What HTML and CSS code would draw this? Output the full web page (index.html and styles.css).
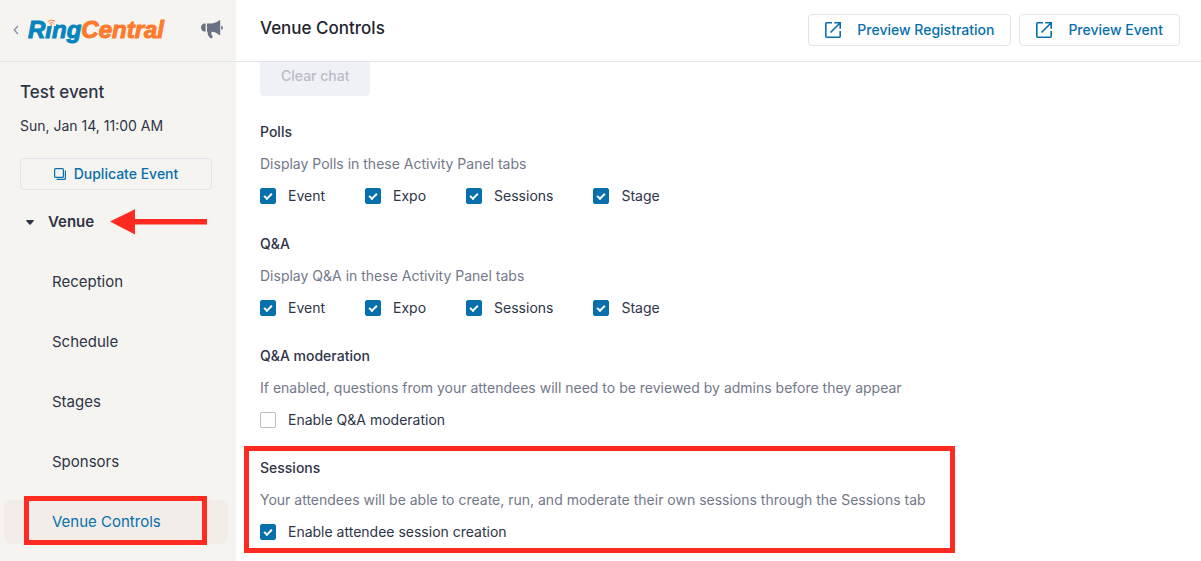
FILE: index.html
```
<!DOCTYPE html>
<html lang="en">
<head>
<meta charset="utf-8">
<meta name="viewport" content="width=device-width, initial-scale=1">
<title>Venue Controls</title>
<link rel="stylesheet" href="styles.css">
</head>
<body>
<div class="app">
  <aside class="sidebar">
    <div class="brand-bar">
      <button class="icon-button back" type="button" aria-label="Back">
        <svg width="6" height="10" viewBox="0 0 6 10" fill="none" stroke="#858a9a" stroke-width="1.200"><path d="M5 1 1.200 5 5 9"/></svg>
      </button>
      <a class="logo" href="#"><span class="logo-ring">Ring</span><span class="logo-central">Central</span>
        <svg class="logo-signal" width="9" height="7" viewBox="0 0 9 7" fill="none" stroke="#ff7a2b"><path class="logo-patch" d="M0 0h9v7H0z"/><path d="M.8 2.600Q4-.4 8 2.200M2.400 4.500Q4.300 2.800 6.600 4.200"/><circle cx="4.300" cy="6" r=".6"/></svg>
      </a>
      <button class="icon-button announce" type="button" aria-label="Announcements">
        <svg width="22" height="19" viewBox="0 0 22 19" fill="#6b7184"><path d="M4.600 3.600v8H3.400C1.500 11.600 0 9.800 0 7.600s1.500-4 3.400-4zM6 3.500C11 4 15.500 2.600 18.300.2q.9-.5.9.5v13.800q0 1-.9.500C16 13 13.700 12 11.200 11.800q-1.500.9-.8 2.800l1.400 1.800-1.200 2.100C8 17.700 6.300 15 6.600 11.700H6zM20.200 5.700c2.300.2 2.300 3.800 0 4z"/></svg>
      </button>
    </div>
    <div class="event">
      <h2 class="event-name">Test event</h2>
      <p class="event-date">Sun, Jan 14, 11:00 AM</p>
      <button class="button duplicate" type="button">
        <svg width="12" height="12" viewBox="0 0 12 12" fill="none" stroke="currentColor" stroke-width="1.200"><rect x=".6" y=".6" width="8.800" height="8.800" rx="1"/><path d="M11.400 2.500v7.900a1 1 0 0 1-1 1H2.500"/></svg>
        Duplicate Event
      </button>
    </div>
    <nav class="nav">
      <button class="nav-group" type="button" aria-expanded="true">
        <svg width="8" height="5" viewBox="0 0 8 5" fill="currentColor"><path d="M.7 0h6.600q1 .2.4 1L4.600 4.600q-.6.500-1.200 0L.3 1Q-.2.2.7 0z"/></svg>
        Venue
        <svg class="arrow" width="97" height="26" viewBox="0 0 97 26" fill="#ff2a20"><path d="M0 12.500 25 .3v9.800h72v5.500H25v10z"/></svg>
      </button>
      <ul class="nav-list">
        <li><a class="nav-link" href="#">Reception</a></li>
        <li><a class="nav-link" href="#">Schedule</a></li>
        <li><a class="nav-link" href="#">Stages</a></li>
        <li><a class="nav-link" href="#">Sponsors</a></li>
        <li><a class="nav-link current" href="#" aria-current="page">Venue Controls</a></li>
      </ul>
    </nav>
  </aside>
  <main class="main">
    <header class="topbar">
      <h1 class="page-title">Venue Controls</h1>
      <div class="actions">
        <button class="button preview" type="button">
          <svg width="16" height="16" viewBox="0 0 16 16" fill="none" stroke="currentColor" stroke-width="1.600"><path d="M7 .8H1.800a1 1 0 0 0-1 1v12.400a1 1 0 0 0 1 1h12.400a1 1 0 0 0 1-1V9M9.300.8h5.900v5.900M15 1 5.500 10.500"/></svg>
          Preview Registration
        </button>
        <button class="button preview" type="button">
          <svg width="16" height="16" viewBox="0 0 16 16" fill="none" stroke="currentColor" stroke-width="1.600"><path d="M7 .8H1.800a1 1 0 0 0-1 1v12.400a1 1 0 0 0 1 1h12.400a1 1 0 0 0 1-1V9M9.300.8h5.900v5.900M15 1 5.500 10.500"/></svg>
          Preview Event
        </button>
      </div>
    </header>
    <div class="content">
      <button class="clear-chat" type="button" disabled>Clear chat</button>
      <section class="setting">
        <h3 class="setting-title">Polls</h3>
        <p class="setting-text">Display Polls in these Activity Panel tabs</p>
        <div class="options">
          <label class="option"><input class="check" type="checkbox" checked>Event</label>
          <label class="option"><input class="check" type="checkbox" checked>Expo</label>
          <label class="option"><input class="check" type="checkbox" checked>Sessions</label>
          <label class="option"><input class="check" type="checkbox" checked>Stage</label>
        </div>
      </section>
      <section class="setting">
        <h3 class="setting-title">Q&amp;A</h3>
        <p class="setting-text">Display Q&amp;A in these Activity Panel tabs</p>
        <div class="options">
          <label class="option"><input class="check" type="checkbox" checked>Event</label>
          <label class="option"><input class="check" type="checkbox" checked>Expo</label>
          <label class="option"><input class="check" type="checkbox" checked>Sessions</label>
          <label class="option"><input class="check" type="checkbox" checked>Stage</label>
        </div>
      </section>
      <section class="setting">
        <h3 class="setting-title">Q&amp;A moderation</h3>
        <p class="setting-text">If enabled, questions from your attendees will need to be reviewed by admins before they appear</p>
        <div class="options">
          <label class="option"><input class="check" type="checkbox">Enable Q&amp;A moderation</label>
        </div>
      </section>
      <section class="setting highlighted">
        <h3 class="setting-title">Sessions</h3>
        <p class="setting-text">Your attendees will be able to create, run, and moderate their own sessions through the Sessions tab</p>
        <div class="options">
          <label class="option"><input class="check" type="checkbox" checked>Enable attendee session creation</label>
        </div>
      </section>
    </div>
  </main>
</div>
</body>
</html>
```
FILE: styles.css
```
*, *::after { box-sizing: border-box; }
body {
  margin: 0;
  color: #2e3447;
  background: #fff;
  font: 14px/20px Inter, "Liberation Sans", sans-serif;
}
h1, h2, h3, p, ul { margin: 0; padding: 0; }
button { font: inherit; color: inherit; cursor: pointer; }
svg { flex: none; }

.app {
  display: grid;
  grid-template-columns: 236px minmax(0, 1fr);
  height: 100vh;
  overflow: hidden;
}
.sidebar { background: #f6f4f0; }

.brand-bar {
  display: flex;
  align-items: center;
  height: 62px;
  padding: 0 13px 2px 12px;
  border-bottom: 1px solid #e3e3ea;
}
.icon-button {
  display: flex;
  padding: 0;
  border: 0;
  background: none;
}
.back { width: 16px; padding-left: 1px; }
.announce { margin-left: auto; }
.logo {
  position: relative;
  font: italic bold 24px/28px "Liberation Sans", Arial, sans-serif;
  text-decoration: none;
  -webkit-text-stroke: 1px currentColor;
}
.logo-ring { color: #0684bd; }
.logo-central { color: #ff7a2b; }
.logo-signal { position: absolute; left: 19px; top: 3px; }
.logo-patch { fill: #f6f4f0; stroke: none; }

.event {
  display: flex;
  flex-direction: column;
  padding: 18px 16px 0 20px;
}
.event-name { font-size: 17px; line-height: 24px; font-weight: 500; }
.event-date { margin-top: 12px; }
.button {
  display: flex;
  align-items: center;
  justify-content: center;
  height: 32px;
  border: 1px solid #e2e3ea;
  border-radius: 4px;
  background: transparent;
  color: #066fac;
  font-weight: 500;
}
.duplicate { width: 192px; margin-top: 22px; gap: 8px; }

.nav-group {
  position: relative;
  display: flex;
  align-items: center;
  gap: 14px;
  height: 24px;
  margin: 20px 0 0 26px;
  padding: 0;
  border: 0;
  background: none;
  font-size: 15px;
  font-weight: 600;
}
.arrow { position: absolute; left: 84px; top: -1px; }
.nav-list {
  display: grid;
  gap: 16px;
  margin-top: 26px;
  padding: 0 8px 0 4px;
  list-style: none;
}
.nav-link {
  display: block;
  position: relative;
  padding: 10px 0 10px 48px;
  border-radius: 8px;
  color: inherit;
  font-size: 15px;
  line-height: 24px;
  text-decoration: none;
}
.current { color: #066fac; background: #f2ede9; }
.current::after {
  content: "";
  position: absolute;
  inset: -4px 21px -1px 20px;
  border: 5px solid #ff2a20;
}

.topbar {
  position: relative;
  z-index: 1;
  display: flex;
  align-items: center;
  justify-content: space-between;
  height: 62px;
  padding: 0 21px 2px 24px;
  border-bottom: 1px solid #e3e3e6;
  background: #fff;
}
.page-title { color: #1f2430; font-size: 17px; line-height: 24px; font-weight: 500; padding-bottom: 4px; }
.actions { display: flex; gap: 8px; }
.preview { gap: 16px; padding: 0 16px; }

.content { padding: 0 24px; margin-top: -6px; }
.clear-chat {
  display: block;
  height: 40px;
  margin-bottom: 26px;
  padding: 0 21px;
  border: 0;
  border-radius: 4px;
  background: #f0f1f6;
  color: #babdc6;
  font-weight: 500;
  cursor: default;
}
.setting {
  position: relative;
  display: grid;
  gap: 12px;
  margin-bottom: 28px;
}
.setting-title { font-size: 14px; line-height: 20px; font-weight: 500; }
.setting-text { color: #737889; }
.options { display: flex; flex-wrap: wrap; gap: 12px 40px; }
.option { display: flex; align-items: center; gap: 12px; }
.check {
  appearance: none;
  display: grid;
  place-items: center;
  width: 16px;
  height: 16px;
  margin: 0;
  border: 1px solid #b9bcc9;
  border-radius: 2px;
  background: #fff;
}
.check:checked { border-color: #066fac; background: #066fac; }
.check:checked::after {
  content: "";
  width: 8px;
  height: 5px;
  margin-bottom: 2px;
  border: solid #fff;
  border-width: 0 0 2px 2px;
  transform: rotate(-45deg);
}
.highlighted::after {
  content: "";
  position: absolute;
  top: -12px;
  bottom: -11px;
  left: -16px;
  width: 711px;
  border: 5px solid #ff2a20;
  pointer-events: none;
}
```
